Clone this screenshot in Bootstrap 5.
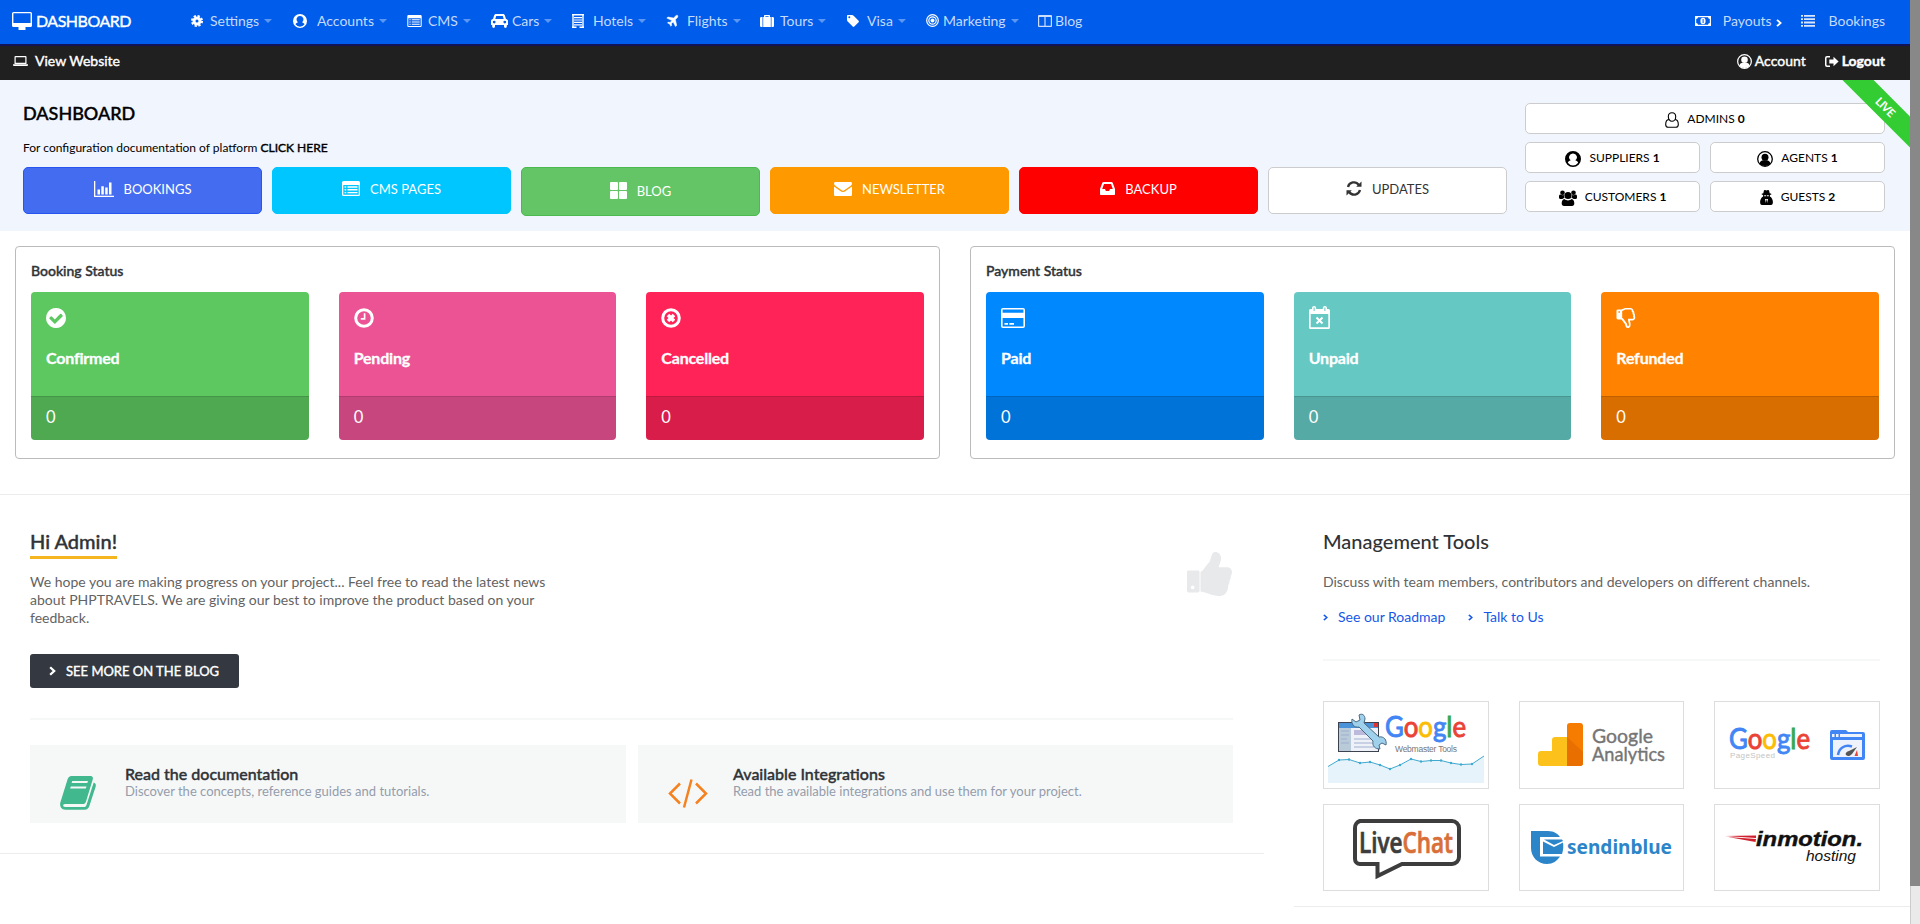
<!DOCTYPE html>
<html lang="en">
<head>
<meta charset="utf-8">
<meta name="viewport" content="width=device-width, initial-scale=1">
<title>Dashboard</title>
<link rel="stylesheet" href="https://cdn.jsdelivr.net/npm/bootstrap@5.3.0/dist/css/bootstrap.min.css">
<style>
html,body{height:924px;overflow:hidden}
body{font-family:Lato,"Liberation Sans",sans-serif;font-size:14px;line-height:18px;color:#2f3337;background:#fff}
svg{display:block;flex:none;fill:currentColor;overflow:visible}
a{text-decoration:none;color:inherit}
.page-wrap{width:1910px;height:924px;overflow:hidden}
.scroll-rail{width:10px;height:924px;background:#eaeaea;border-left:1px solid #ccc}
.scroll-rail div{height:886px;background:#888;margin-left:-1px}
.fx{-webkit-text-stroke:.4px currentColor}
.top-nav{height:44px;background:#005ceb;color:#c6dafa;padding:0 25px 3px 12px}
.top-nav svg{color:#fff}
.brand-box{width:179px;color:#fff;letter-spacing:-.5px;font-size:16px}
.brand-box svg{margin-right:4px}
.nav-cell .ico{display:flex;flex:none}
.nav-cell .dd{border:4px solid transparent;border-top-color:#5c97f3;border-bottom:0;margin-left:5px}
.w-settings{width:102px}.w-accounts{width:114px}.w-cms{width:84px}.w-cars{width:81px}.w-hotels{width:94px}.w-flights{width:94px}.w-tours{width:87px}.w-visa{width:79px}.w-marketing{width:112px}
.i17{width:17px}.i19{width:19px}.i20{width:20px}.i21{width:21px}.i24{width:24px}.i28{width:28px}
.payouts{margin-right:19px}
.sub-nav{height:36px;background:#202020;border-top:2px solid #13135a;color:#fff;padding:0 25px 4px 13px}
.view-site{margin-left:7px}
.account svg{margin-right:3px}
.logout{margin-left:19px}
.logout svg{margin-right:3px}
.hero{height:151px;background:#f1f5fd;position:relative;overflow:hidden;padding:23px 25px 0 23px;color:#000}
.hero h1{font-size:18px;line-height:22px;margin:-1px 0 0}
.hero p{font-size:12px;line-height:18px;margin:15px 0 10px}
.acts{gap:10px;font-size:13px}
.act{width:239px;height:47px;border:1px solid;border-radius:5px;display:flex;align-items:center;justify-content:center;gap:10px;color:#fff;padding-bottom:4px}
.a-book{background:#446cf0;border-color:#2755f0}.a-cms{background:#00c6ff;border-color:#00c6ff}.a-blog{background:#64c566;border-color:#4cb850;height:49px;padding-bottom:2px}
.a-news{background:#f90;border-color:#f90}.a-back{background:#f00;border-color:#f00}.a-upd{background:#fff;border-color:#ccc;color:#333}
.counts{width:360px;gap:8px 10px;font-size:12px}
.count{height:31px;background:#fff;border:1px solid #ccc;border-radius:5px;display:flex;align-items:center;justify-content:center;width:175px;gap:8px}
.count svg{margin-top:2px}
.count.full{width:360px}.count b{margin-left:-5px}
.ribbon{position:absolute;right:-38px;top:14px;width:130px;height:22px;background:#3c3;color:#fff;transform:rotate(45deg);font-size:11.5px;line-height:22px;text-align:center;font-weight:700;letter-spacing:-.5px;padding-left:6px}
.stats{padding:15px 15px 35px;gap:30px;border-bottom:1px solid #ececec}
.panel{width:925px;height:213px;border:1px solid #bbb;border-radius:4px;padding:15px 15px}
.panel h2{font-size:14px;line-height:18px;margin:0 0 12px}
.tiles{gap:30px}
.tile{flex:1;height:148px;border-radius:4px;overflow:hidden;color:#fff}
.tile .up{height:104px;padding:16px 15px}
.tile .up svg{height:20px}
.tile .nm{font-size:16px;font-weight:700;line-height:20px;margin-top:20px;letter-spacing:-.2px;-webkit-text-stroke:.3px currentColor}
.tile .lo{height:44px;background:rgba(0,0,0,.15);border-top:1px solid rgba(0,0,0,.12);padding:10px 15px;font-size:16.5px;line-height:20px}
.t-g{background:#5dc760}.t-p{background:#eb5395}.t-r{background:#ff2357}.t-b{background:#08f}.t-t{background:#65c8c3}.t-o{background:#ff8200}
.left-col{width:1264px;height:359px;border-bottom:1px solid #ececec;padding:34px 31px 0 30px}
.right-col{width:616px;height:412px;border-bottom:1px solid #ececec;padding:34px 30px 0 29px}
.left-col h2,.right-col h2{font-size:20px;line-height:24px;margin:0}
.left-col h2{display:inline-block;border-bottom:3px solid #f5b51e;height:30px}
.greeting-txt{padding-top:14px}
.tools-txt{margin-top:20px!important}
.body-txt{color:#636363;margin:0}
.more{width:209px;height:34px;background:#343840;color:#fff;border-radius:3px;padding-left:19px;gap:10px;margin-top:27px;font-size:13px}
.thumb{color:#e8e9eb;margin:23px 1px 0 0}
.rule{height:2px;background:#f6f7f7;margin-top:30px}
.right-col .rule{margin-top:33px}
.infos{margin-top:25px}
.info{width:596px;height:78px;background:#f6f8f8;padding:19px 0 0 30px}
.info + .info{width:595px}
.info .pic{width:65px}
.info h3{font-size:16px;line-height:19px;margin:0}
.info p{font-size:13px;line-height:16px;color:#959cab;margin:0}
.book{color:#42b88f;margin-top:12px}
.code{color:#f58220;margin-top:15px}
.lnks{color:#1558e8;margin-top:17px}
.lnks a{margin-left:10px}
.lnks a + svg{margin-left:23px}
.logos{margin-top:40px;gap:15px 30px}
.logo-box{width:165.6px;height:87.6px;border:1px solid #ddd}
.logo-box svg{margin:-1px;width:166px;height:88px}
</style>
</head>
<body>
<svg width="0" height="0" class="position-absolute">
<symbol id="chev" viewBox="0 0 6 8"><path d="M1 .8 4.6 4 1 7.2" fill="none" stroke="currentColor" stroke-width="1.8"/></symbol>
<symbol id="usr" viewBox="0 0 16 16"><path fill-rule="evenodd" d="M8 0a8 8 0 1 0 0 16A8 8 0 0 0 8 0zM8 2.4a3.8 3.8 0 0 1 2.3 6.9c1.700.5 2.500 1.500 2.900 2.500a6.400 6.400 0 0 1-10.400 0c.4-1 1.200-2 2.900-2.500A3.800 3.800 0 0 1 8 2.400z"/></symbol>
<symbol id="usr2" viewBox="0 0 16 16"><circle cx="8" cy="8" r="7.300" fill="none" stroke="currentColor" stroke-width="1.300"/><circle cx="8" cy="6.200" r="3.500"/><path d="M2.500 12.500C3 10 5 9.300 6 9.300h4c1 0 3 .7 3.500 3.200A7 7 0 0 1 8 15a7 7 0 0 1-5.500-2.500z"/></symbol>
<symbol id="listbox" viewBox="0 0 18 15"><path fill-rule="evenodd" d="M1.500 0h15A1.500 1.500 0 0 1 18 1.500v12a1.500 1.500 0 0 1-1.500 1.500h-15A1.500 1.500 0 0 1 0 13.500v-12A1.500 1.500 0 0 1 1.500 0zM1.300 4v9.700h15.400V4z"/><path d="M2.600 5.300h1.600v1.400H2.600zM5.500 5.300h10v1.400h-10zM2.600 8.100h1.600v1.400H2.600zM5.500 8.100h10v1.400h-10zM2.600 10.900h1.600v1.400H2.600zM5.500 10.900h10v1.400h-10z"/></symbol>
</svg>
<div class="d-flex">
<div class="page-wrap">
<nav class="top-nav d-flex align-items-center">
 <a class="brand-box d-flex align-items-center fx" href="#"><svg width="20" height="18" viewBox="0 0 20 18"><path fill-rule="evenodd" d="M1.500 0h17A1.500 1.500 0 0 1 20 1.500v12a1.500 1.500 0 0 1-1.500 1.500h-5v3h-7v-3h-5A1.500 1.500 0 0 1 0 13.500v-12A1.500 1.500 0 0 1 1.500 0zM1.400 1.300v9.700h17.200V1.300z"/></svg>DASHBOARD</a>
 <a class="nav-cell w-settings d-flex align-items-center" href="#"><span class="ico i19"><svg width="12" height="12" viewBox="0 0 12 12"><circle cx="6" cy="6" r="3" fill="none" stroke="currentColor" stroke-width="3"/><circle cx="6" cy="6" r="5.100" fill="none" stroke="currentColor" stroke-width="1.900" stroke-dasharray="2.300 1.700"/></svg></span>Settings<i class="dd"></i></a>
 <a class="nav-cell w-accounts d-flex align-items-center" href="#"><span class="ico i24"><svg width="14" height="14"><use href="#usr"/></svg></span>Accounts<i class="dd"></i></a>
 <a class="nav-cell w-cms d-flex align-items-center" href="#"><span class="ico i21"><svg width="15" height="12"><use href="#listbox"/></svg></span>CMS<i class="dd"></i></a>
 <a class="nav-cell w-cars d-flex align-items-center" href="#"><span class="ico i21"><svg width="17" height="14" viewBox="0 0 17 14"><path fill-rule="evenodd" d="M5 0h7c1 0 1.600.6 1.900 1.500L15 5c1.300.2 2 1 2 2v4h-1.200v1.600a1.400 1.400 0 0 1-2.800 0V11H4v1.600a1.400 1.400 0 0 1-2.800 0V11H0V7c0-1 .7-1.800 2-2l1.100-3.500C3.400.600 4 0 5 0zM5.200 2 4.300 5h8.400l-.9-3zM3.200 6.700a1.400 1.400 0 1 0 0 2.800 1.400 1.400 0 0 0 0-2.800zm10.600 0a1.400 1.400 0 1 0 0 2.800 1.400 1.400 0 0 0 0-2.800z"/></svg></span>Cars<i class="dd"></i></a>
 <a class="nav-cell w-hotels d-flex align-items-center" href="#"><span class="ico i21"><svg width="12" height="14" viewBox="0 0 12 14"><path d="M0 0h12v1.400H0zM.3 1h1.400v12.500H.3zM10.300 1h1.400v12.500h-1.400zM0 12.600h4.500V14H0zM7.500 12.600H12V14H7.500z"/><path d="M2 3h8v1.200H2zM2 5.400h8v1.200H2zM2 7.800h8V9H2zM2 10.200h8v1.200H2z"/></svg></span>Hotels<i class="dd"></i></a>
 <a class="nav-cell w-flights d-flex align-items-center" href="#"><span class="ico i21"><svg width="12" height="12" viewBox="0 0 12 12"><path d="M11.600.4c.5.600.3 1.700-.6 2.600L9.400 4.600l1.300 5.900-1.200 1.100L7.200 6.900 5.400 8.700l.3 1.700-.9.900-1.100-2.200L1.500 8l.9-.9 1.700.3L5.900 5.600.8 3.100 2 2l5.800 1.100L9.200 1.300c.9-1 1.900-1.400 2.400-.9z" stroke="currentColor" stroke-width=".5"/></svg></span>Flights<i class="dd"></i></a>
 <a class="nav-cell w-tours d-flex align-items-center" href="#"><span class="ico i20"><svg width="14" height="12" viewBox="0 0 14 12"><path fill-rule="evenodd" d="M4 2V.8c0-.5.300-.8.800-.8h4.400c.5 0 .8.300.8.800V2h.8v10H3.200V2zM5.400 1.200V2h3.200v-.8zM1.300 2h1.200v10H1.300A1.300 1.300 0 0 1 0 10.700V3.300C0 2.600.6 2 1.300 2zM11.500 2h1.200c.7 0 1.300.6 1.300 1.300v7.400c0 .7-.6 1.300-1.300 1.300h-1.200z"/></svg></span>Tours<i class="dd"></i></a>
 <a class="nav-cell w-visa d-flex align-items-center" href="#"><span class="ico i20"><svg width="12" height="12" viewBox="0 0 12 12"><path fill-rule="evenodd" d="M0 1C0 .4.4 0 1 0h4c.5 0 1.200.3 1.600.7l5 5c.5.500.5 1.100 0 1.600l-4.300 4.300c-.5.500-1.100.5-1.600 0l-5-5C.3 6.200 0 5.500 0 5zM2.300 1.300a1 1 0 1 0 0 2 1 1 0 0 0 0-2z"/></svg></span>Visa<i class="dd"></i></a>
 <a class="nav-cell w-marketing d-flex align-items-center" href="#"><span class="ico i17"><svg width="13" height="13" viewBox="0 0 13 13"><g fill="none" stroke="currentColor" stroke-width="1.200"><circle cx="6.500" cy="6.500" r="5.800"/><circle cx="6.500" cy="6.500" r="3.700"/></g><circle cx="6.500" cy="6.500" r="2"/></svg></span>Marketing<i class="dd"></i></a>
 <a class="nav-cell d-flex align-items-center" href="#"><span class="ico i17"><svg width="14" height="12" viewBox="0 0 14 12" opacity=".8"><path fill-rule="evenodd" d="M1 0h12a1 1 0 0 1 1 1v10a1 1 0 0 1-1 1H1a1 1 0 0 1-1-1V1a1 1 0 0 1 1-1zM1.200 2v8.800h5.200V2zm6.400 0v8.800h5.200V2z"/></svg></span>Blog</a>
 <a class="nav-cell payouts d-flex align-items-center ms-auto" href="#"><span class="ico i28"><svg width="16" height="10" viewBox="0 0 16 10"><path fill-rule="evenodd" d="M0 0h16v10H0zM3 1.200A2 2 0 0 1 1.200 3v4A2 2 0 0 1 3 8.800h10A2 2 0 0 1 14.800 7V3A2 2 0 0 1 13 1.200z"/><path fill-rule="evenodd" d="M8 1.800a2.600 3.200 0 1 0 0 6.400 2.600 3.200 0 0 0 0-6.400zM7.600 3h1v4h-1z"/></svg></span>Payouts<svg class="ms-1 mt-1" width="6" height="8"><use href="#chev"/></svg></a>
 <a class="nav-cell d-flex align-items-center" href="#"><span class="ico i28"><svg width="14" height="12" viewBox="0 0 14 12" opacity=".85"><path d="M0 0h2v1.800H0zM3 0h11v1.800H3zM0 3.300h2v1.800H0zM3 3.300h11v1.800H3zM0 6.600h2v1.800H0zM3 6.600h11v1.800H3zM0 9.900h2v1.800H0zM3 9.900h11v1.800H3z"/></svg></span>Bookings</a>
</nav>
<div class="sub-nav d-flex align-items-center">
 <svg width="15" height="10" viewBox="0 0 15 10"><path fill-rule="evenodd" d="M2.500 0h10a1 1 0 0 1 1 1v7h-12V1a1 1 0 0 1 1-1zM2.700 1.200v5.600h9.600V1.200zM0 8.300h15v.7a1 1 0 0 1-1 1H1a1 1 0 0 1-1-1z"/></svg>
 <a href="#" class="fx view-site">View Website</a>
 <a href="#" class="account d-flex align-items-center ms-auto fx"><svg width="15" height="15"><use href="#usr2"/></svg>Account</a>
 <a href="#" class="logout d-flex align-items-center fw-bold fx"><svg width="14" height="11" viewBox="0 0 14 11"><path d="M5 0v1.500H2c-.3 0-.5.2-.5.5v7c0 .3.200.5.5.5h3V11H2a2 2 0 0 1-2-2V2a2 2 0 0 1 2-2zM8.500.700 13.600 5.500 8.500 10.300V7.500H4.300v-4h4.200z"/></svg>Logout</a>
</div>
<header class="hero d-flex justify-content-between">
 <div>
  <h1 class="fx">DASHBOARD</h1>
  <p>For configuration documentation of platform <a href="#" class="fx">CLICK HERE</a></p>
  <div class="acts d-flex">
   <a href="#" class="act a-book"><svg width="20" height="16" viewBox="0 0 20 16"><path d="M0 0h1.300v14.700H20V16H0zM3.500 8.500H6v5H3.500zM7.300 5.200h2.500v8.300H7.300zM11.200 6.500h2.500v7h-2.500zM15 1.500h2.500v12H15z"/></svg>BOOKINGS</a>
   <a href="#" class="act a-cms"><svg width="18" height="15"><use href="#listbox"/></svg>CMS PAGES</a>
   <a href="#" class="act a-blog"><svg width="17" height="17" viewBox="0 0 17 17"><rect width="8" height="8" rx="1"/><rect x="9" width="8" height="8" rx="1"/><rect y="9" width="8" height="8" rx="1"/><rect x="9" y="9" width="8" height="8" rx="1"/></svg>BLOG</a>
   <a href="#" class="act a-news"><svg width="18" height="14" viewBox="0 0 18 14"><path d="M1.500 0h15C17.500 0 18 .7 18 1.500c0 1-.8 2-1.600 2.500L11 7.800c-.7.500-1.300.9-2 .9s-1.300-.4-2-.9L1.600 4C.8 3.500 0 2.500 0 1.600 0 .7.500 0 1.500 0z"/><path d="M0 4.400c.3.300 3.800 2.700 6.300 4.500.8.600 1.700 1.100 2.700 1.100s1.900-.5 2.700-1.100C14.200 7.100 17.700 4.700 18 4.400v8c0 .900-.7 1.600-1.600 1.600H1.600C.7 14 0 13.300 0 12.400z"/></svg>NEWSLETTER</a>
   <a href="#" class="act a-back"><svg width="15" height="13" viewBox="0 0 15 13"><path fill-rule="evenodd" d="M3.500 0h8c.5 0 1 .3 1.200.8L15 7v5.300c0 .4-.3.700-.7.700H.7c-.4 0-.7-.3-.7-.7V7L2.300.8C2.500.3 3 0 3.500 0zM4 2 2.200 7H5l.9 2h3.200l.9-2h2.800L11 2z"/></svg>BACKUP</a>
   <a href="#" class="act a-upd"><svg width="16" height="15" viewBox="0 0 16 15"><path d="M2 6A6 6 0 0 1 12.800 4M14 9A6 6 0 0 1 3.200 11" fill="none" stroke="currentColor" stroke-width="2.300"/><path d="M15.500.5v5.300h-5.300zM.5 14.500V9.200h5.300z"/></svg>UPDATES</a>
  </div>
 </div>
 <div class="counts d-flex flex-wrap align-content-start">
  <div class="count full"><svg width="14" height="16" viewBox="0 0 14 16"><path d="M7 .7c2.200 0 3.700 1.600 3.700 4S9.200 9.300 7 9.300 3.300 7 3.300 4.700 4.800.7 7 .7zM3.700 7.500C1.500 7.800.7 10 .7 12.500c0 1.800 1 2.800 2.600 2.800h7.400c1.600 0 2.600-1 2.600-2.800 0-2.500-.8-4.700-3-5" fill="none" stroke="currentColor" stroke-width="1.100"/></svg><span>ADMINS</span><b>0</b></div>
  <div class="count"><svg width="16" height="16"><use href="#usr"/></svg><span>SUPPLIERS</span><b>1</b></div>
  <div class="count"><svg width="16" height="16"><use href="#usr2"/></svg><span>AGENTS</span><b>1</b></div>
  <div class="count"><svg width="18" height="16" viewBox="0 0 18 16"><circle cx="3.500" cy="2.700" r="2.300"/><circle cx="14.500" cy="2.700" r="2.300"/><circle cx="9" cy="5.500" r="3.600"/><path d="M0 6.500C0 5.500.5 4.500 1.300 4.600c1 .6 2.500.8 3.500.5 0 1 .2 2 .8 2.700C5 8 4 8.300 3.500 9h-2C.5 9 0 8.300 0 7.500zM18 6.500c0-1-.5-2-1.300-1.900-1 .6-2.500.8-3.500.5 0 1-.2 2-.8 2.700.6.200 1.600.5 2.100 1.200h2c1 0 1.500-.7 1.500-1.500zM5.500 9c1 1 2 1.400 3.500 1.400s2.500-.4 3.500-1.400c2 .2 2.800 2 2.800 4.500 0 1.500-.9 2.500-2.300 2.500H5c-1.400 0-2.300-1-2.300-2.500C2.700 11 3.500 9.200 5.500 9z"/></svg><span>CUSTOMERS</span><b>1</b></div>
  <div class="count"><svg width="13" height="15" viewBox="0 0 13 15"><path fill-rule="evenodd" d="M4 .3 5.200 0 6.500.6 7.800 0 9 .3l.7 3 1.600.5v.7L9.900 5v1.500c1.700.7 3 3.300 3 5.500 0 1.800-.6 3-1.900 3H2C.7 15 .1 13.800.1 12c0-2.200 1.300-4.800 3-5.500V5l-1.400-.5v-.7l1.600-.5zM4.200 5.200v1h1.900v-1zm2.700 0v1h1.900v-1zM5 9l.9 4 .4-3.500h.4l.4 3.500L8 9z"/></svg><span>GUESTS</span><b>2</b></div>
 </div>
 <div class="ribbon">LIVE</div>
</header>
<section class="stats d-flex">
 <div class="panel"><h2 class="fx">Booking Status</h2>
  <div class="tiles d-flex">
   <div class="tile t-g"><div class="up"><svg width="20" height="20" viewBox="128 128 1536 1536"><path d="M1412 734q0-28-18-46l-91-90q-19-19-45-19t-45 19l-408 407-226-226q-19-19-45-19t-45 19l-91 90q-18 18-18 46 0 27 18 45l362 362q19 19 45 19 27 0 46-19l543-543q18-18 18-45zm252 162q0 209-103 385.500t-279.500 279.500-385.500 103-385.500-103-279.500-279.500-103-385.500 103-385.500 279.500-279.500 385.500-103 385.500 103 279.500 279.500 103 385.500z"/></svg><div class="nm">Confirmed</div></div><div class="lo">0</div></div>
   <div class="tile t-p"><div class="up"><svg width="20" height="20" viewBox="0 0 20 20"><circle cx="10" cy="10" r="8.300" fill="none" stroke="currentColor" stroke-width="3"/><path d="M10.600 5.300v5.600H6.800" fill="none" stroke="currentColor" stroke-width="1.700"/></svg><div class="nm">Pending</div></div><div class="lo">0</div></div>
   <div class="tile t-r"><div class="up"><svg width="20" height="20" viewBox="0 0 20 20"><circle cx="10" cy="10" r="8.300" fill="none" stroke="currentColor" stroke-width="3"/><path d="M7 7l6 6M13 7l-6 6" stroke="currentColor" stroke-width="3.600"/></svg><div class="nm">Cancelled</div></div><div class="lo">0</div></div>
  </div>
 </div>
 <div class="panel"><h2 class="fx">Payment Status</h2>
  <div class="tiles d-flex">
   <div class="tile t-b"><div class="up"><svg width="24" height="20" viewBox="0 0 24 20"><path fill-rule="evenodd" d="M2 0h20a2 2 0 0 1 2 2v16a2 2 0 0 1-2 2H2a2 2 0 0 1-2-2V2a2 2 0 0 1 2-2zM1.600 1.600v3.200h20.800V1.600zm0 8.400v8.400h20.800V10z"/><path d="M3.500 15h3.500v1.700H3.500zM8.300 15h4.700v1.700H8.300z"/></svg><div class="nm">Paid</div></div><div class="lo">0</div></div>
   <div class="tile t-t"><div class="up"><svg width="21" height="20" viewBox="0 2 21 20"><path fill-rule="evenodd" d="M1.500 3H3V2a2 2 0 0 1 4.200 0v1h6.600V2A2 2 0 0 1 18 2v1h1.500A1.500 1.500 0 0 1 21 4.500v17a1.500 1.500 0 0 1-1.500 1.500h-18A1.500 1.500 0 0 1 0 21.500v-17A1.500 1.500 0 0 1 1.500 3zM1.700 8v13.300h17.600V8zM4.600 1.500V5h1V1.500zm10.800 0V5h1V1.500z"/><path d="M7.500 11.500l6 6M13.500 11.500l-6 6" stroke="currentColor" stroke-width="2"/></svg><div class="nm">Unpaid</div></div><div class="lo">0</div></div>
   <div class="tile t-o"><div class="up"><svg width="20" height="21" viewBox="0 0 20 21"><path fill-rule="evenodd" d="M1.500 1.500H5L9 0h5.500c2 0 3 1 3.200 2.500 1 .8 1.200 2 1 3 .8 1 1 2 .6 3C20.500 11 19 13 17 13h-3c.5 1.700 1 3 .8 5-.2 2-1.300 3.200-3.500 3-1.800-.2-1.700-2.500-2.300-4L5.300 12H1.500A1.500 1.500 0 0 1 0 10.500V3a1.500 1.500 0 0 1 1.500-1.500zM6 3.200v7.300l1 .5 3.700 5c.8 1.300.6 3 1.400 3.300 2.500-.8-.1-4.300-.1-7.900h5c.8 0 1.200-1.300.3-2.500.5-1 .4-2-.5-2.600.4-1.300 0-2-.9-2.600.3-1.400-.3-2-1.500-2H9.500zM2 3.300v1.600h1.600V3.300z"/></svg><div class="nm">Refunded</div></div><div class="lo">0</div></div>
  </div>
 </div>
</section>
<div class="d-flex justify-content-between">
 <main class="left-col">
  <div class="d-flex justify-content-between">
   <div>
    <h2 class="fx">Hi Admin!</h2>
    <p class="body-txt greeting-txt text-nowrap">We hope you are making progress on your project... Feel free to read the latest news<br>about PHPTRAVELS. We are giving our best to improve the product based on your<br>feedback.</p>
    <a href="#" class="more d-flex align-items-center fx"><svg width="7" height="10" viewBox="0 0 6 8"><path d="M1 .8 4.400 4 1 7.200" fill="none" stroke="currentColor" stroke-width="2"/></svg>SEE MORE ON THE BLOG</a>
   </div>
   <svg class="thumb" width="45" height="44" viewBox="0 0 46 45"><path fill-rule="evenodd" d="M1.500 19h9.800a1.500 1.500 0 0 1 1.500 1.500v19.300a1.500 1.500 0 0 1-1.500 1.500H1.500A1.500 1.500 0 0 1 0 39.800V20.500A1.500 1.500 0 0 1 1.500 19zM5.800 34.300a1.900 1.900 0 1 0 0 3.800 1.900 1.900 0 0 0 0-3.800zM13.800 20.500c3-1.500 5.500-6.500 8.500-9.500 2.800-2.800 2-11 6.500-11 3.500 0 6 2.500 6 6.500 0 4-2.300 6.500-2.300 9H41c3 0 5 2.300 5 5 0 1.800-.6 3-1.300 4 .2 1.800-.2 3.500-1.300 4.800.2 2-.3 3.500-1.300 4.700.2 6-2.800 11-9.100 11-8 0-12.500-3.800-19.200-4.500z"/></svg>
  </div>
  <div class="rule"></div>
  <div class="infos d-flex justify-content-between">
   <div class="info d-flex"><div class="pic"><svg class="book" width="36" height="34" viewBox="0 0 36 34"><path fill-rule="evenodd" d="M11.500 0h19c2 0 2.800 1.500 2.300 3.300L26 25.500c-.6 1.800-1.600 2.600-3.500 2.600H5c-2.500 0-2.500 3 .3 3H24c1.200 0 2-.6 2.400-1.800L33.700 6.500c2 .8 2.500 2.200 2 4l-6.500 20c-.7 2-2.300 3.200-4.300 3.200H5.500C1.500 33.700-.3 30.500.2 27L7.500 3.500C8.200 1.200 9.500 0 11.500 0zM12.300 5l-.7 2h15.700l.7-2zM10.800 10.500l-.7 2h15.700l.7-2z"/></svg></div>
    <div><h3 class="fx">Read the documentation</h3><p>Discover the concepts, reference guides and tutorials.</p></div></div>
   <div class="info d-flex"><div class="pic"><svg class="code" width="40" height="29" viewBox="0 0 40 29"><path d="M12 4.500 2 14.500l10 10M28 4.500l10 10-10 10M23.500.5 16 28.500" fill="none" stroke="currentColor" stroke-width="2.500"/></svg></div>
    <div><h3 class="fx">Available Integrations</h3><p>Read the available integrations and use them for your project.</p></div></div>
  </div>
 </main>
 <aside class="right-col">
  <h2>Management Tools</h2>
  <p class="body-txt tools-txt">Discuss with team members, contributors and developers on different channels.</p>
  <div class="lnks d-flex align-items-center"><svg width="5" height="7" viewBox="0 0 6 8"><use href="#chev"/></svg><a href="#">See our Roadmap</a><svg width="5" height="7" viewBox="0 0 6 8"><use href="#chev"/></svg><a href="#">Talk to Us</a></div>
  <div class="rule"></div>
  <div class="logos d-flex flex-wrap">
   <div class="logo-box"><svg viewBox="0 0 166 88"><rect x="15.500" y="21.500" width="40" height="29" fill="#eef1f8" stroke="#3c434f"/><path fill="#4a93d8" d="M16 22h39v5H16z"/><path fill="#b9cad8" d="M16 27h12v23H16z"/><path fill="#d33" d="M51 22h4v4h-4z"/><path stroke="#9fb0cf" d="M18 30h8M18 34h8M18 38h6M18 42h8M31 38h20M31 42h18M31 46h20"/><path fill="#bcb9dc" d="M31 29h14v5H31z"/><path d="M36 14c3-2 6 0 6 4l-1 4 15 14c5-1 8 3 7 8l-4-2-3 2 1 4c-5 0-8-3-7-8L36 26c-5 1-8-3-7-8l4 3 4-2z" fill="#9fd0ec" stroke="#4b6b85"/><text x="62" y="36" font-family="Lato" font-size="28" stroke-width=".9" textLength="81" lengthAdjust="spacingAndGlyphs"><tspan fill="#4285f4" stroke="#4285f4">G</tspan><tspan fill="#ea4335" stroke="#ea4335">o</tspan><tspan fill="#fbbc05" stroke="#fbbc05">o</tspan><tspan fill="#4285f4" stroke="#4285f4">g</tspan><tspan fill="#34a853" stroke="#34a853">l</tspan><tspan fill="#ea4335" stroke="#ea4335">e</tspan></text><text x="72" y="51" font-family="Liberation Sans" font-size="8.500" fill="#777" textLength="62">Webmaster Tools</text><path fill="#e6f3fa" d="M5 65.500 16 59l10-.5L37 62l10-1 10 3 10 4 10-4 11-6 10 2.500 10-1h10l10 2.500 10 1.500 11-.5L161 55v27H5z"/><path fill="none" stroke="#3fa9d0" d="M5 65.500 16 59l10-.5L37 62l10-1 10 3 10 4 10-4 11-6 10 2.500 10-1h10l10 2.500 10 1.500 11-.5L161 55"/><g fill="#3fa9d0"><circle cx="16" cy="59" r="1.200"/><circle cx="26" cy="58.500" r="1.200"/><circle cx="37" cy="62" r="1.200"/><circle cx="47" cy="61" r="1.200"/><circle cx="57" cy="64" r="1.200"/><circle cx="67" cy="68" r="1.200"/><circle cx="77" cy="64" r="1.200"/><circle cx="88" cy="58" r="1.200"/><circle cx="98" cy="60.500" r="1.200"/><circle cx="108" cy="59.500" r="1.200"/><circle cx="118" cy="59.500" r="1.200"/><circle cx="128" cy="62" r="1.200"/><circle cx="138" cy="63.500" r="1.200"/><circle cx="149" cy="63" r="1.200"/></g></svg></div>
   <div class="logo-box"><svg viewBox="0 0 166 88"><path fill="#fcc21b" d="M48 36H36a3 3 0 0 0-3 3v11H22a3 3 0 0 0-3 3v9a3 3 0 0 0 3 3h28V36z"/><rect x="48" y="22" width="16" height="43" rx="3" fill="#f57c00"/><path fill="#e96f00" d="M48 36l16 15v11a3 3 0 0 1-3 3H48z"/><g font-family="Lato" font-size="20" fill="#757575" stroke="#757575" stroke-width=".4"><text x="73" y="42" textLength="61" lengthAdjust="spacingAndGlyphs">Google</text><text x="73" y="60" textLength="73" lengthAdjust="spacingAndGlyphs" font-variant-ligatures="none">Analytics</text></g></svg></div>
   <div class="logo-box"><svg viewBox="0 0 166 88"><text x="15" y="48" font-family="Lato" font-size="28" stroke-width=".9" textLength="81" lengthAdjust="spacingAndGlyphs"><tspan fill="#4285f4" stroke="#4285f4">G</tspan><tspan fill="#ea4335" stroke="#ea4335">o</tspan><tspan fill="#fbbc05" stroke="#fbbc05">o</tspan><tspan fill="#4285f4" stroke="#4285f4">g</tspan><tspan fill="#34a853" stroke="#34a853">l</tspan><tspan fill="#ea4335" stroke="#ea4335">e</tspan></text><text x="16" y="57" font-family="Liberation Sans" font-size="8" fill="#c4c4c4" textLength="45">PageSpeed</text><path fill="#4285f4" d="M118 29h14l2 2h15a2 2 0 0 1 2 2v24a2 2 0 0 1-2 2h-31a2 2 0 0 1-2-2V31a2 2 0 0 1 2-2z"/><path fill="#eef2fb" d="M119 39h29v17h-29zM118 33h2.500v3H118zM122 33h2.500v3H122zM126 33h22v3h-22z"/><path d="M124 54c1-7 7-11 14-8.500" fill="none" stroke="#4285f4" stroke-width="2.500"/><path fill="#555" d="M132 54c-1-2 1-3.500 3-4l8-4-5 7c-2 2-4 3-6 1z"/><path fill="#ea4335" d="M143 49l1 6h-3.500z"/></svg></div>
   <div class="logo-box"><svg viewBox="0 0 166 88"><path d="M37 17h92a7 7 0 0 1 7 7v29a7 7 0 0 1-7 7H79L54.500 72V60H37a5 5 0 0 1-5-5V24a7 7 0 0 1 5-7z" fill="none" stroke="#3d3d3d" stroke-width="4"/><text x="36" y="49" font-family="Open Sans" font-size="28" font-weight="600" stroke-width=".7" textLength="94" lengthAdjust="spacingAndGlyphs"><tspan fill="#3d3d3d" stroke="#3d3d3d">Live</tspan><tspan fill="#d96f38" stroke="#d96f38">Chat</tspan></text></svg></div>
   <div class="logo-box"><svg viewBox="0 0 166 88"><path fill="#2c85c8" d="M12 27h17c6 0 10 3 12 6H21v19.500h20C38 57 34 60 28 60c-9 0-16-7-16-16z"/><path fill="#2c85c8" d="M24 37.500l11 5.500 9-4.500c.6 4 .3 8-1 11.500H24z"/><path fill="#2c85c8" d="M25 35.500h18l1 1.500-9 4z"/><text x="48" y="50" font-family="Noto Sans" font-size="20" font-weight="700" fill="#2c85c8" textLength="105" lengthAdjust="spacingAndGlyphs">sendinblue</text></svg></div>
   <div class="logo-box"><svg viewBox="0 0 166 88"><path fill="#d0202e" d="M11 32l31-.5v2.500zM14 33l28 2-.5 3z"/><g font-style="italic" fill="#111"><text x="42" y="42" font-family="Liberation Sans" font-size="20" font-weight="700" stroke="#111" stroke-width=".4" textLength="107" lengthAdjust="spacingAndGlyphs">inmotion.</text><text x="92" y="57" font-family="Liberation Sans" font-size="15.500" textLength="50" lengthAdjust="spacingAndGlyphs">hosting</text></g></svg></div>
  </div>
 </aside>
</div>
</div>
<div class="scroll-rail"><div></div></div>
</div>
<script src="https://cdn.jsdelivr.net/npm/bootstrap@5.3.0/dist/js/bootstrap.bundle.min.js"></script>
</body>
</html>
